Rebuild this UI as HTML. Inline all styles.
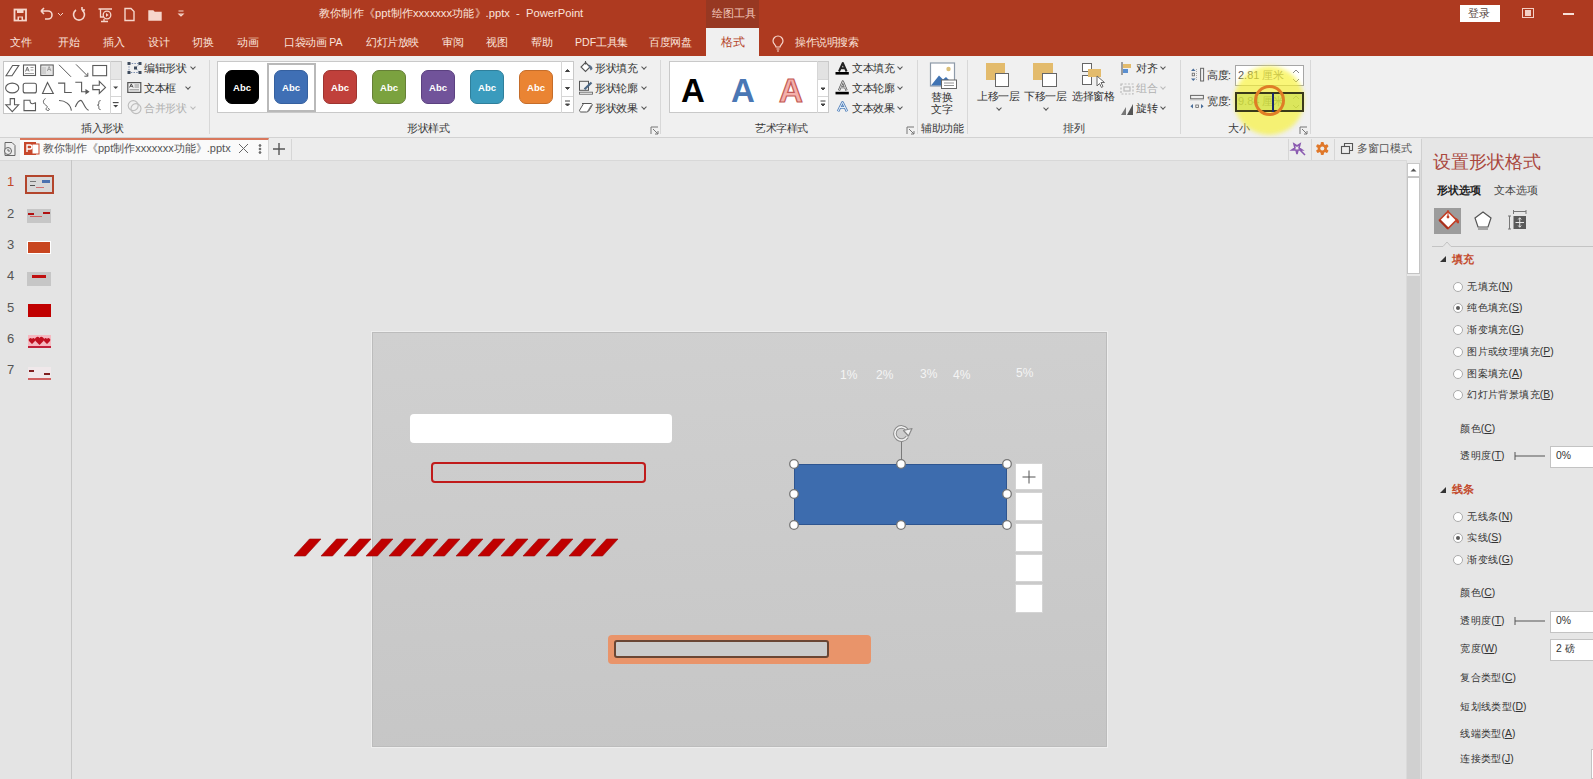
<!DOCTYPE html>
<html><head><meta charset="utf-8">
<style>
*{margin:0;padding:0;box-sizing:border-box}
html,body{width:1593px;height:779px;overflow:hidden;background:#e4e4e4;font-family:"Liberation Sans",sans-serif;position:relative}
.a{position:absolute}
.t{position:absolute;white-space:nowrap;line-height:1}
svg{position:absolute;overflow:visible}
#title{left:0;top:0;width:1593px;height:56px;background:#ae3a20}
.wt{color:#fbe3dc;font-size:10.6px}
.rb{color:#333;font-size:10.5px}
.gl{color:#3a3a3a;font-size:10.5px}
.dd{width:4px;height:4px;border-right:1px solid;border-bottom:1px solid;transform:rotate(45deg)}
.pn{color:#333;font-size:10.4px;margin-top:1px}
.sb{left:1016px;width:26px;background:#fff;box-shadow:0 0 0 1px #d4d4d4}
.sty{top:70px;width:34px;height:34px;border-radius:7px;border:1.5px solid}
.sty::after{content:"Abc";position:absolute;left:0;right:0;top:11.5px;text-align:center;color:#fff;font-size:9.5px;font-weight:bold;line-height:1}
i{font-style:normal;display:inline-block;width:1em;text-align:center}
</style></head>
<body>
<!-- TITLE BAR -->
<div id="title" class="a"></div>
<div class="a" style="left:706px;top:0;width:53px;height:28px;background:#973822"></div>
<div class="t wt" style="left:712px;top:8px;font-size:11px;color:#f3c9bd"><i>绘</i><i>图</i><i>工</i><i>具</i></div>
<div class="t wt" style="left:319px;top:8px;font-size:11.2px"><i>教</i><i>你</i><i>制</i><i>作</i><i>《</i>ppt<i>制</i><i>作</i>xxxxxxx<i>功</i><i>能</i><i>》</i>.pptx&nbsp; -&nbsp; PowerPoint</div>
<!-- QAT icons -->
<svg style="left:0;top:0" width="200" height="28" fill="none" stroke="#f6d6cc" stroke-width="1.6">
  <rect x="14.5" y="9.5" width="11.5" height="11" stroke-width="1.8"/>
  <rect x="17" y="10" width="6.5" height="3" fill="#f6d6cc" stroke="none"/>
  <rect x="17.5" y="16.5" width="5.5" height="4" fill="#f6d6cc" stroke="none"/>
  <rect x="19" y="17.5" width="2.5" height="2.5" fill="#ae3a20" stroke="none"/>
  <path d="M41 11 h7 a4 4 0 0 1 0 8 h-3 M41 11 l3 -3 M41 11 l3 3"/>
  <path d="M58 13 l2.5 2.5 l2.5 -2.5" stroke-width="1"/>
  <path d="M82 10 a5.5 5.5 0 1 1 -6 0 M82 10 v-3 M82 10 h3" />
  <path d="M98.5 9 h13.5 M100.5 9 v8 h3 M104 19 v2 M101 21.5 h7" stroke-width="1.3"/>
  <circle cx="107" cy="15" r="3.8" stroke-width="1.3"/>
  <path d="M106 13 l2.6 2 l-2.6 2 z" fill="#f6d6cc" stroke="none"/>
  <path d="M125 8.5 h6 l3 3 v9 h-9 z" stroke-width="1.4"/>
  <path d="M149 11 h4 l1.5 1.5 h6.5 v7.5 h-12 z" stroke-width="1.4" fill="#f6d6cc"/>
  <path d="M178.5 11 h5 M179 14 l2 2 l2 -2 z" stroke-width="1.2"/>
</svg>
<div class="a" style="left:1460px;top:5px;width:40px;height:17px;background:#fff"></div>
<div class="t" style="left:1468px;top:8px;font-size:11px;color:#5a4a44"><i>登</i><i>录</i></div>
<div class="a" style="left:1522px;top:8px;width:12px;height:10px;border:1.5px solid #f3cfc4"></div>
<div class="a" style="left:1525px;top:10px;width:6px;height:6px;background:#f3cfc4"></div>
<div class="a" style="left:1563px;top:13px;width:11px;height:1.5px;background:#f8e0d8"></div>
<!-- TABS -->
<div class="a" style="left:706px;top:28px;width:53px;height:29px;background:#f0f0f0"></div>
<div class="t wt" style="left:10px;top:37px"><i>文</i><i>件</i></div>
<div class="t wt" style="left:58px;top:37px"><i>开</i><i>始</i></div>
<div class="t wt" style="left:103px;top:37px"><i>插</i><i>入</i></div>
<div class="t wt" style="left:148px;top:37px"><i>设</i><i>计</i></div>
<div class="t wt" style="left:192px;top:37px"><i>切</i><i>换</i></div>
<div class="t wt" style="left:237px;top:37px"><i>动</i><i>画</i></div>
<div class="t wt" style="left:284px;top:37px"><i>口</i><i>袋</i><i>动</i><i>画</i> PA</div>
<div class="t wt" style="left:366px;top:37px"><i>幻</i><i>灯</i><i>片</i><i>放</i><i>映</i></div>
<div class="t wt" style="left:442px;top:37px"><i>审</i><i>阅</i></div>
<div class="t wt" style="left:486px;top:37px"><i>视</i><i>图</i></div>
<div class="t wt" style="left:531px;top:37px"><i>帮</i><i>助</i></div>
<div class="t wt" style="left:575px;top:37px">PDF<i>工</i><i>具</i><i>集</i></div>
<div class="t wt" style="left:649px;top:37px"><i>百</i><i>度</i><i>网</i><i>盘</i></div>
<div class="t" style="left:721px;top:36px;font-size:12px;color:#b5472c"><i>格</i><i>式</i></div>
<svg style="left:771px;top:35px" width="16" height="18" fill="none" stroke="#f6d6cc" stroke-width="1.2">
  <path d="M5 12 c0 -2 -3 -3 -3 -6 a5 5 0 0 1 10 0 c0 3 -3 4 -3 6 z M5.5 14 h3 M6 16 h2"/>
</svg>
<div class="t wt" style="left:795px;top:37px"><i>操</i><i>作</i><i>说</i><i>明</i><i>搜</i><i>索</i></div>

<!-- RIBBON -->
<div class="a" style="left:0;top:56px;width:1593px;height:82px;background:#f0f0f0;border-bottom:1px solid #d2d2d2"></div>

<!-- RIBBON GROUP 1: insert shapes -->
<div class="a" style="left:3px;top:61px;width:119px;height:53px;background:#fff;border:1px solid #c6c6c6"></div>
<div class="a" style="left:110px;top:61px;width:12px;height:53px;border-left:1px solid #d6d6d6"></div>
<div class="a" style="left:111px;top:62px;width:10px;height:17px;background:#e6e6e6"></div>
<div class="a" style="left:111px;top:79px;width:10px;height:1px;background:#d6d6d6"></div>
<div class="a" style="left:111px;top:96px;width:10px;height:1px;background:#d6d6d6"></div>
<svg style="left:0;top:0" width="125" height="120" fill="none" stroke="#5a5a5a" stroke-width="1.1">
  <path d="M6 75.7 L12.6 65.5 H18.8 L12 75.7 Z"/>
  <rect x="23.5" y="65" width="12" height="10.5"/><path d="M25.5 71.5 l1.8 -4.5 l1.8 4.5 M26.2 70 h2.2" stroke-width=".8"/><path d="M30.5 67.5 h3 M30.5 70 h3 M25 73.5 h9" stroke-width=".8" stroke="#888"/>
  <rect x="40.8" y="65" width="12.4" height="10.5"/><path d="M43 66.5 v8 M45 66.5 v8" stroke-width=".8" stroke="#888"/><path d="M47.3 71 l1.8 -4.5 l1.8 4.5 M48 69.5 h2.2" stroke-width=".8"/><rect x="46" y="66" width="6.5" height="9" fill="#ccc" stroke="none" opacity=".5"/>
  <path d="M59 64.8 L71 76.8" stroke-width="1"/>
  <path d="M76 64.4 L87.8 76.2 M87.8 76.2 v-3.4 M87.8 76.2 h-3.4" stroke-width="1"/>
  <rect x="92.8" y="65.5" width="13.8" height="10.2"/>
  <ellipse cx="12.2" cy="88" rx="6.6" ry="4.9"/>
  <rect x="23.2" y="83.2" width="13.2" height="9.7" rx="2"/>
  <path d="M47.5 82.5 L42.5 93.5 H53.3 Z"/>
  <path d="M58.1 83.1 H64.7 V92.5 H71.8"/>
  <path d="M75.3 82.3 H81.6 V91.7 H87.5"/><path d="M86 90 l2.6 1.7 l-2.6 1.7 z" fill="#5a5a5a"/>
  <path d="M92.8 85.2 H99.3 V81.3 L105.5 87.4 L99.3 93.5 V89.6 H92.8 Z"/>
  <path d="M10.2 98.6 H14.5 V104.8 H18.6 L12.3 111.6 L5.8 104.8 H10.2 Z"/>
  <path d="M24 100.2 H30 c0 2 1 3.5 2.5 3.5 c1.5 0 2.5 -1 3 -1 V110.6 H24 Z"/>
  <path d="M45.5 98.6 c-2 1 -3 3.5 -1 5.5 c2 2 4 2 2 4 c-1.5 1.5 1 3 2.5 2 c1 -.5 0 -2 -1 -1.5" stroke-width="1"/>
  <path d="M59 100.5 C65 100.5 70.5 104 71.4 110.6"/>
  <path d="M75.3 107 C77 103 79 100.4 80.8 100.4 C83 100.4 85 110.2 88.7 110.2"/>
  <path d="M100.6 100.6 c-1.5 0 -1.8 .8 -1.8 2.2 v1 c0 .8 -.6 1.3 -1.3 1.3 c.7 0 1.3 .5 1.3 1.3 v1 c0 1.4 .3 2.2 1.8 2.2" stroke-width="1"/>
  <path d="M113.2 86.5 l2.5 2.5 l2.5 -2.5 z" fill="#444" stroke="none"/>
  <path d="M112.8 102.6 h5.8" stroke="#444"/><path d="M113.2 105 l2.5 2.5 l2.5 -2.5 z" fill="#444" stroke="none"/>
</svg>
<svg style="left:0;top:0" width="150" height="120" fill="none">
  <path d="M129 63.5 H140 M129 63.5 V72.5 H140 M140 63.5 L135.5 68 L140 72.5" stroke="#7d8fb0" stroke-width="1" stroke-dasharray="1.5 1.2"/>
  <g fill="#3d4a5c"><rect x="127.5" y="62" width="3" height="3"/><rect x="138.5" y="62" width="3" height="3"/><rect x="127.5" y="71" width="3" height="3"/><rect x="138.5" y="71" width="3" height="3"/><rect x="134" y="66.5" width="3" height="3"/></g>
  <rect x="127.8" y="82.6" width="13" height="9.8" stroke="#555" stroke-width="1.2"/>
  <path d="M129.5 87.5 l1.8 -3.6 l1.8 3.6 M130.2 86.3 h2.2" stroke="#444" stroke-width=".9"/><path d="M134.5 85 h4.5 M134.5 87 h4.5 M129.5 89.8 h9.5" stroke="#777" stroke-width=".8"/>
  <circle cx="133.2" cy="105.6" r="5" stroke="#bdbdbd" stroke-width="1.1"/><circle cx="136" cy="108.6" r="5" stroke="#bdbdbd" stroke-width="1.1"/>
</svg>
<div class="t rb" style="left:144px;top:63px"><i>编</i><i>辑</i><i>形</i><i>状</i></div>
<div class="t rb" style="left:144px;top:83px"><i>文</i><i>本</i><i>框</i></div>
<div class="t rb" style="left:144px;top:103px;color:#b0b0b0"><i>合</i><i>并</i><i>形</i><i>状</i></div>
<div class="t gl" style="left:81px;top:123px"><i>插</i><i>入</i><i>形</i><i>状</i></div>
<div class="a" style="left:209px;top:60px;width:1px;height:74px;background:#d8d8d8"></div>

<!-- GROUP 2: shape styles -->
<div class="a" style="left:217px;top:61px;width:357px;height:52px;background:#fff;border:1px solid #c9c9c9"></div>
<div class="a" style="left:561px;top:61px;width:13px;height:52px;border-left:1px solid #d6d6d6"></div>
<div class="a" style="left:562px;top:79px;width:11px;height:1px;background:#d6d6d6"></div>
<div class="a" style="left:562px;top:96px;width:11px;height:1px;background:#d6d6d6"></div>
<svg style="left:561px;top:61px" width="13" height="52" stroke="#444" fill="#444">
  <path d="M4.5 10.5 l2 -2 l2 2 z"/><path d="M4.5 26.5 l2 2 l2 -2 z"/><path d="M4 40 h5" fill="none"/><path d="M4.5 43 l2 2 l2 -2 z"/>
</svg>
<div class="a" style="left:267px;top:63px;width:49px;height:49px;border:2px solid #b9b9b9;background:#fff"></div>
<div class="a sty" style="left:225px;background:#000;border-color:#000"></div>
<div class="a sty" style="left:274px;background:#3f6fb5;border-color:#35609f"></div>
<div class="a sty" style="left:323px;background:#c0403b;border-color:#9e3430"></div>
<div class="a sty" style="left:372px;background:#7ba23f;border-color:#667f37"></div>
<div class="a sty" style="left:421px;background:#71539a;border-color:#5b4180"></div>
<div class="a sty" style="left:470px;background:#3a9bbd;border-color:#2f7f9b"></div>
<div class="a sty" style="left:519px;background:#ea8433;border-color:#c56d2a"></div>
<svg style="left:0;top:0" width="600" height="120" fill="none">
  <path d="M585.5 62.5 L590 67 L585.5 71.5 L581 67 Z" stroke="#555" stroke-width="1.1" fill="#fff"/>
  <path d="M585.5 61 v3.5" stroke="#555" stroke-width="1.1"/>
  <path d="M588.5 64.5 c2.5 .8 4 2.5 4 4.5 l-1.8 1.5 l-1.2 -2.5 z" fill="#5b6f88"/>
  <rect x="579.5" y="81.3" width="9" height="9" stroke="#555" stroke-width="1"/>
  <path d="M584.5 89.3 L591.5 82.5" stroke="#4a6684" stroke-width="2.2"/>
  <rect x="579.5" y="92.2" width="13" height="2" stroke="#666" stroke-width=".9" fill="#fff"/>
  <path d="M582 103.5 H591 c1 0 1.5 1 1 2 l-3 5 c-.5 1 -1.5 1.5 -2.5 1.5 H581 c-1 0 -1.8 -1 -1.3 -2 l3 -5 c.3 -.8 .8 -1.5 1.3 -1.5 z" fill="#fff" stroke="#555" stroke-width="1"/>
  <path d="M587 111.5 l4 -6.5 l1.2 .5 l-3.5 6 z" fill="#777"/>
</svg>
<div class="t rb" style="left:595px;top:63px"><i>形</i><i>状</i><i>填</i><i>充</i></div>
<div class="t rb" style="left:595px;top:83px"><i>形</i><i>状</i><i>轮</i><i>廓</i></div>
<div class="t rb" style="left:595px;top:103px"><i>形</i><i>状</i><i>效</i><i>果</i></div>
<div class="t gl" style="left:407px;top:123px"><i>形</i><i>状</i><i>样</i><i>式</i></div>
<svg style="left:650px;top:126px" width="9" height="9" fill="none" stroke="#777" stroke-width="1"><path d="M1 8 v-7 h7 M3 3 l5 5 M8 5 v3 h-3"/></svg>
<div class="a" style="left:660px;top:60px;width:1px;height:74px;background:#d8d8d8"></div>

<!-- GROUP 3: WordArt -->
<div class="a" style="left:669px;top:61px;width:160px;height:52px;background:#fff;border:1px solid #c9c9c9"></div>
<div class="a" style="left:817px;top:61px;width:12px;height:52px;border-left:1px solid #d6d6d6"></div>
<div class="a" style="left:818px;top:62px;width:10px;height:17px;background:#e2e2e2"></div>
<div class="a" style="left:818px;top:79px;width:10px;height:1px;background:#d6d6d6"></div>
<div class="a" style="left:818px;top:96px;width:10px;height:1px;background:#d6d6d6"></div>
<svg style="left:817px;top:61px" width="12" height="52" stroke="#444" fill="#444">
  <path d="M4 27 l2 2 l2 -2 z"/><path d="M3.5 40 h5" fill="none"/><path d="M4 43 l2 2 l2 -2 z"/>
</svg>
<div class="t" style="left:681px;top:74px;font-size:33px;color:#000;font-weight:bold">A</div>
<div class="t" style="left:731px;top:74px;font-size:33px;color:#4a77b4;font-weight:bold">A</div>
<div class="t" style="left:779px;top:74px;font-size:33px;color:#f4b0aa;-webkit-text-stroke:1.2px #c45a55;font-weight:bold">A</div>
<svg style="left:0;top:0" width="860" height="120" fill="none" stroke-linejoin="round">
  <path d="M839 71.5 L842.8 63 L846.6 71.5 M840.6 68.3 h4.4" stroke="#222" stroke-width="2"/>
  <rect x="835.5" y="72" width="13.3" height="2.6" fill="#000"/>
  <path d="M839 90.5 L842.8 81.5 L846.6 90.5 M840.6 87.2 h4.4" stroke="#555" stroke-width="2.2"/>
  <path d="M839 90.5 L842.8 81.5 L846.6 90.5 M840.6 87.2 h4.4" stroke="#f0f0f0" stroke-width=".8"/>
  <rect x="835.5" y="91.8" width="13.3" height="2.6" fill="#000"/>
  <path d="M838 111.3 L842.5 102.3 L847 111.3 M839.8 107.5 h5.4" stroke="#5684bd" stroke-width="2.6"/>
  <path d="M838 111.3 L842.5 102.3 L847 111.3 M839.8 107.5 h5.4" stroke="#e3eef9" stroke-width="1"/>
</svg>
<div class="t rb" style="left:852px;top:63px"><i>文</i><i>本</i><i>填</i><i>充</i></div>
<div class="t rb" style="left:852px;top:83px"><i>文</i><i>本</i><i>轮</i><i>廓</i></div>
<div class="t rb" style="left:852px;top:103px"><i>文</i><i>本</i><i>效</i><i>果</i></div>
<div class="t gl" style="left:755px;top:123px"><i>艺</i><i>术</i><i>字</i><i>样</i><i>式</i></div>
<svg style="left:906px;top:126px" width="9" height="9" fill="none" stroke="#777" stroke-width="1"><path d="M1 8 v-7 h7 M3 3 l5 5 M8 5 v3 h-3"/></svg>
<div class="a" style="left:917px;top:60px;width:1px;height:74px;background:#d8d8d8"></div>

<!-- GROUP 4: alt text -->
<svg style="left:0;top:0" width="960" height="120">
  <rect x="930.5" y="63" width="24" height="23" fill="#fff" stroke="#8e9aa8" stroke-width="1.2"/>
  <path d="M931 85.5 L939 75.5 L943 79.5 L946 77 L953 84 V85.5 Z" fill="#3f73b3"/>
  <circle cx="948.5" cy="69" r="2.2" fill="#dcc07a"/>
  <rect x="941.5" y="80" width="15" height="8.5" fill="#fff" stroke="#666" stroke-width="1"/>
  <path d="M944 83 h10 M944 85.5 h10" stroke="#888" stroke-width=".9"/>
</svg>
<div class="t rb" style="left:931px;top:92px;font-size:11px"><i>替</i><i>换</i></div>
<div class="t rb" style="left:931px;top:104px;font-size:11px"><i>文</i><i>字</i></div>
<div class="t gl" style="left:921px;top:123px"><i>辅</i><i>助</i><i>功</i><i>能</i></div>
<div class="a" style="left:967px;top:60px;width:1px;height:74px;background:#d8d8d8"></div>

<!-- GROUP 5: arrange -->
<div class="a" style="left:986px;top:63px;width:19px;height:17px;background:#e3bb6c"></div>
<div class="a" style="left:995px;top:73px;width:14px;height:14px;background:#fff;border:1px solid #666"></div>
<div class="a" style="left:1033px;top:63px;width:20px;height:17px;background:#e3bb6c"></div>
<div class="a" style="left:1042px;top:73px;width:15px;height:14px;background:#fff;border:1px solid #666"></div>
<svg style="left:1080px;top:60px" width="28" height="30" fill="none" stroke="#666" stroke-width="1">
  <rect x="2.5" y="3.5" width="9" height="8" fill="#fff"/>
  <rect x="2.5" y="15.5" width="9" height="9" fill="#fff"/>
  <rect x="8" y="9" width="13" height="8" fill="#e3bb6c" stroke="none"/>
  <path d="M17 16 v10 l2.5 -2.5 l2 4 l1.5 -1 l-2 -4 h3.5 z" fill="#fff" stroke="#666"/>
</svg>
<div class="t rb" style="left:977px;top:91px"><i>上</i><i>移</i><i>一</i><i>层</i></div>
<div class="t rb" style="left:1024px;top:91px"><i>下</i><i>移</i><i>一</i><i>层</i></div>
<div class="t rb" style="left:1072px;top:91px"><i>选</i><i>择</i><i>窗</i><i>格</i></div>
<svg style="left:1119px;top:60px" width="16" height="56" fill="none" stroke-width="1.2">
  <path d="M3 2 v13" stroke="#666"/><rect x="4" y="4" width="8" height="4" fill="#e3bb6c" stroke="none"/><rect x="4" y="9" width="5" height="4" fill="#5a8fd0" stroke="none"/>
  <path d="M2 24 v10 h12 v-10 z" stroke="#bbb" stroke-dasharray="2 1.5"/><rect x="5" y="27" width="6" height="4" stroke="#bbb"/>
  <path d="M2 55 l5 -8 v8 z" fill="#777" stroke="none"/><path d="M8 55 l6 -11 v11 z" fill="#555" stroke="none"/>
</svg>
<div class="t rb" style="left:1136px;top:63px"><i>对</i><i>齐</i></div>
<div class="t rb" style="left:1136px;top:83px;color:#b0b0b0"><i>组</i><i>合</i></div>
<div class="t rb" style="left:1136px;top:103px"><i>旋</i><i>转</i></div>
<div class="t gl" style="left:1063px;top:123px"><i>排</i><i>列</i></div>
<div class="a" style="left:1180px;top:60px;width:1px;height:74px;background:#d8d8d8"></div>

<div class="a dd" style="left:191px;top:65px;border-color:#555"></div>
<div class="a dd" style="left:186px;top:85px;border-color:#555"></div>
<div class="a dd" style="left:191px;top:105px;border-color:#bbb"></div>
<div class="a dd" style="left:642px;top:65px;border-color:#555"></div>
<div class="a dd" style="left:642px;top:85px;border-color:#555"></div>
<div class="a dd" style="left:642px;top:105px;border-color:#555"></div>
<div class="a dd" style="left:898px;top:65px;border-color:#555"></div>
<div class="a dd" style="left:898px;top:85px;border-color:#555"></div>
<div class="a dd" style="left:898px;top:105px;border-color:#555"></div>
<div class="a dd" style="left:997px;top:106px;border-color:#555"></div>
<div class="a dd" style="left:1044px;top:106px;border-color:#555"></div>
<div class="a dd" style="left:1161px;top:65px;border-color:#555"></div>
<div class="a dd" style="left:1161px;top:85px;border-color:#bbb"></div>
<div class="a dd" style="left:1161px;top:105px;border-color:#555"></div>
<!-- GROUP 6: size -->
<svg style="left:0;top:0" width="1210" height="120" fill="none">
  <path d="M1191 71 l2.3 -2.6 l2.3 2.6 z M1191 78.5 l2.3 2.6 l2.3 -2.6 z" fill="#4a6e9a"/>
  <rect x="1192.2" y="73.2" width="2.4" height="2.6" stroke="#666" stroke-width=".8"/>
  <path d="M1196.5 69 v12" stroke="#999" stroke-width=".8" stroke-dasharray="1 1"/>
  <rect x="1200.6" y="68.3" width="3" height="12.7" stroke="#666" stroke-width="1"/>
  <rect x="1190.6" y="95.4" width="12.8" height="3.4" stroke="#666" stroke-width="1"/>
  <path d="M1190.5 100 h13" stroke="#999" stroke-width=".8" stroke-dasharray="1 1"/>
  <path d="M1193 104 l-2.6 2.3 l2.6 2.3 z M1201 104 l2.6 2.3 l-2.6 2.3 z" fill="#4a6e9a"/>
  <rect x="1195.8" y="105" width="2.6" height="2.4" stroke="#666" stroke-width=".8"/>
</svg>
<div class="t rb" style="left:1207px;top:70px"><i>高</i><i>度</i>:</div>
<div class="t rb" style="left:1207px;top:96px"><i>宽</i><i>度</i>:</div>
<div class="a" style="left:1235px;top:65px;width:69px;height:21px;background:#fff;border:1px solid #a6a6a6"></div>
<div class="t" style="left:1238px;top:70px;font-size:11px;color:#555">2.81 <span style="color:#777"><i>厘</i><i>米</i></span></div>
<svg style="left:1291px;top:67px" width="10" height="18" fill="none" stroke="#888" stroke-width="1"><path d="M2 6 l3 -3 l3 3 M2 12 l3 3 l3 -3"/></svg>
<div class="a" style="left:1235px;top:92px;width:69px;height:20px;background:#fff;border:1px solid #a6a6a6"></div>
<div class="t" style="left:1238px;top:96px;font-size:11px;color:#888">9.84 <i>厘</i><i>米</i></div>
<svg style="left:1291px;top:93px" width="10" height="18" fill="none" stroke="#aaa" stroke-width="1"><path d="M2 6 l3 -3 l3 3 M2 12 l3 3 l3 -3"/></svg>
<div class="t gl" style="left:1228px;top:123px"><i>大</i><i>小</i></div>
<svg style="left:1299px;top:126px" width="9" height="9" fill="none" stroke="#777" stroke-width="1"><path d="M1 8 v-7 h7 M3 3 l5 5 M8 5 v3 h-3"/></svg>
<div class="a" style="left:1310px;top:60px;width:1px;height:74px;background:#d8d8d8"></div>
<!-- cursor highlight -->
<div class="a" style="left:1234px;top:66px;width:70px;height:69px;border-radius:50%;background:rgba(247,242,50,.66);filter:blur(2px)"></div>
<div class="a" style="left:1235px;top:92px;width:69px;height:20px;border:2px solid #3a3a1a;background:rgba(160,200,40,.35)"></div>
<div class="a" style="left:1272px;top:93px;width:2px;height:19px;background:#1a2a6a"></div>
<div class="a" style="left:1254px;top:85px;width:31px;height:31px;border-radius:50%;border:3.5px solid #df7d26"></div>


<!-- DOC TAB BAR -->
<div class="a" style="left:0;top:138px;width:1421px;height:23px;background:#ececec;border-bottom:1px solid #d8d8d8"></div>
<svg style="left:2px;top:141px" width="16" height="16" fill="none" stroke="#666" stroke-width="1">
  <path d="M3 1.5 h7 l3 3 v10 h-10 z"/><circle cx="6" cy="10" r="3.5" fill="#ececec"/><path d="M6 8 v2 h2"/>
</svg>
<div class="a" style="left:20px;top:138px;width:249px;height:22px;background:#fafafa;border-top:2px solid #d9785d;border-right:1px solid #d6d6d6"></div>
<svg style="left:24px;top:141px" width="16" height="16">
  <rect x="0" y="1" width="12" height="13" fill="#c7472b"/><rect x="8" y="3" width="7" height="10" fill="#fff" stroke="#c7472b"/>
  <path d="M3 11 v-7 h3 a2 2 0 0 1 0 4 h-3" fill="none" stroke="#fff" stroke-width="1.4"/>
</svg>
<div class="t" style="left:43px;top:143px;font-size:11px;color:#555"><i>教</i><i>你</i><i>制</i><i>作</i><i>《</i>ppt<i>制</i><i>作</i>xxxxxxx<i>功</i><i>能</i><i>》</i>.pptx</div>
<svg style="left:238px;top:143px" width="30" height="12" fill="none" stroke="#666" stroke-width="1"><path d="M1 1 l9 9 M10 1 l-9 9"/><circle cx="22" cy="2.5" r=".9" fill="#666"/><circle cx="22" cy="6" r=".9" fill="#666"/><circle cx="22" cy="9.5" r=".9" fill="#666"/></svg>
<svg style="left:272px;top:142px" width="14" height="14" fill="none" stroke="#555" stroke-width="1.4"><path d="M7 1 v12 M1 7 h12"/></svg>
<div class="a" style="left:291px;top:139px;width:1px;height:21px;background:#d6d6d6"></div>
<div class="a" style="left:1288px;top:139px;width:1px;height:21px;background:#d6d6d6"></div>
<div class="a" style="left:1311px;top:139px;width:1px;height:21px;background:#d6d6d6"></div>
<div class="a" style="left:1334px;top:139px;width:1px;height:21px;background:#d6d6d6"></div>
<svg style="left:1291px;top:141px" width="16" height="16" fill="none" stroke="#8a5ab0" stroke-width="1.6"><path d="M3 3 l3 2 l3 -2 l-1 4 l3 2 h-4 l-1 4 l-1 -4 h-4 l3 -2 z M9 9 l5 5" /></svg>
<svg style="left:1314px;top:141px" width="16" height="16"><g fill="#e0782a" transform="translate(8.3 7.6)"><rect x="-1.6" y="-6.5" width="3.2" height="13" rx="1"/><rect x="-1.6" y="-6.5" width="3.2" height="13" rx="1" transform="rotate(60)"/><rect x="-1.6" y="-6.5" width="3.2" height="13" rx="1" transform="rotate(120)"/><circle r="4.6"/></g><circle cx="8.3" cy="7.6" r="2" fill="#ececec"/></svg>
<svg style="left:1340px;top:142px" width="14" height="14" fill="none" stroke="#555" stroke-width="1.1"><rect x="1.5" y="4.5" width="8" height="7"/><path d="M4.5 4.5 v-3 h8 v7 h-3"/></svg>
<div class="t" style="left:1357px;top:143px;font-size:11px;color:#555"><i>多</i><i>窗</i><i>口</i><i>模</i><i>式</i></div>

<!-- THUMB PANE -->
<div class="a" style="left:71px;top:160px;width:1px;height:619px;background:#c6c6c6"></div>
<div class="t" style="left:7px;top:175px;font-size:13px;color:#c0462b">1</div>
<div class="t" style="left:7px;top:207px;font-size:13px;color:#555">2</div>
<div class="t" style="left:7px;top:238px;font-size:13px;color:#555">3</div>
<div class="t" style="left:7px;top:269px;font-size:13px;color:#555">4</div>
<div class="t" style="left:7px;top:301px;font-size:13px;color:#555">5</div>
<div class="t" style="left:7px;top:332px;font-size:13px;color:#555">6</div>
<div class="t" style="left:7px;top:363px;font-size:13px;color:#555">7</div>
<div class="a" style="left:25px;top:175px;width:29px;height:19px;border:2.5px solid #b3452c;background:#d8d8d8"></div>
<div class="a" style="left:30px;top:181px;width:6px;height:1px;background:#777"></div>
<div class="a" style="left:42px;top:180px;width:8px;height:3px;background:#4a72b0"></div>
<div class="a" style="left:30px;top:185px;width:5px;height:1px;background:#555"></div>
<div class="a" style="left:36px;top:187px;width:8px;height:1px;background:#d07070"></div>
<div class="a" style="left:27px;top:209px;width:24px;height:14px;background:#c6c6c6"></div>
<div class="a" style="left:28px;top:213px;width:6px;height:2px;background:#b01010"></div>
<div class="a" style="left:43px;top:212px;width:7px;height:2px;background:#b01010"></div>
<div class="a" style="left:30px;top:216px;width:12px;height:1px;background:#d06060"></div>
<div class="a" style="left:27px;top:241px;width:24px;height:13px;background:#c8451f;border:1px solid #fff"></div>
<div class="a" style="left:27px;top:272px;width:24px;height:14px;background:#c6c6c6"></div>
<div class="a" style="left:32px;top:275px;width:14px;height:3px;background:#c01010"></div>
<div class="a" style="left:28px;top:304px;width:23px;height:13px;background:#c00000"></div>
<div class="a" style="left:28px;top:335px;width:23px;height:13px;background:#f5b8c0;border-bottom:2px solid #c0203a"></div>
<svg style="left:28px;top:335px" width="23" height="11" fill="#c01020"><path d="M4 9 l-3 -3 a1.6 1.6 0 0 1 3 -2 a1.6 1.6 0 0 1 3 2 z"/><path d="M11.5 10 l-4 -4 a2.2 2.2 0 0 1 4 -3 a2.2 2.2 0 0 1 4 3 z"/><path d="M19 9 l-3 -3 a1.6 1.6 0 0 1 3 -2 a1.6 1.6 0 0 1 3 2 z"/></svg>
<div class="a" style="left:28px;top:367px;width:23px;height:13px;background:#f0e8ea;border-bottom:2px solid #d06060"></div>
<div class="a" style="left:29px;top:370px;width:5px;height:2px;background:#802020"></div>
<div class="a" style="left:44px;top:373px;width:6px;height:2px;background:#802020"></div>

<!-- SLIDE -->
<div class="a" style="left:371px;top:331px;width:737px;height:417px;border:1px solid #eeeeee"></div>
<div class="a" style="left:372px;top:332px;width:735px;height:415px;background:linear-gradient(178deg,#d0d0d0 0%,#c6c6c6 100%);border:1px solid #bcbcbc"></div>
<div class="a" style="left:410px;top:414px;width:262px;height:29px;background:#fff;border-radius:4px"></div>
<div class="a" style="left:431px;top:462px;width:215px;height:21px;border:2px solid #c01b1b;border-radius:4px"></div>
<svg style="left:0;top:0" width="1593" height="779">
  <g fill="#c00000" stroke="#9a0a0a" stroke-width=".6"><path d="M294 556 L305.5 556 L321 539 L309.5 539 Z"/><path d="M321 556 L332.5 556 L348 539 L336.5 539 Z"/><path d="M344 556 L355.5 556 L371 539 L359.5 539 Z"/><path d="M366 556 L377.5 556 L393 539 L381.5 539 Z"/><path d="M389 556 L400.5 556 L416 539 L404.5 539 Z"/><path d="M411 556 L422.5 556 L438 539 L426.5 539 Z"/><path d="M433 556 L444.5 556 L460 539 L448.5 539 Z"/><path d="M456 556 L467.5 556 L483 539 L471.5 539 Z"/><path d="M478 556 L489.5 556 L505 539 L493.5 539 Z"/><path d="M501 556 L512.5 556 L528 539 L516.5 539 Z"/><path d="M523 556 L534.5 556 L550 539 L538.5 539 Z"/><path d="M546 556 L557.5 556 L573 539 L561.5 539 Z"/><path d="M569 556 L580.5 556 L596 539 L584.5 539 Z"/><path d="M591 556 L602.5 556 L618 539 L606.5 539 Z"/></g>
</svg>
<div class="a" style="left:608px;top:635px;width:263px;height:29px;background:#e9946a;border-radius:4px"></div>
<div class="a" style="left:614px;top:640px;width:215px;height:18px;background:#cbcbcb;border:2px solid #6a4634;border-radius:3px"></div>
<!-- percent labels -->
<div class="t" style="left:840px;top:369px;font-size:12px;color:#f4f4f4">1%</div>
<div class="t" style="left:876px;top:369px;font-size:12px;color:#f4f4f4">2%</div>
<div class="t" style="left:920px;top:368px;font-size:12px;color:#f4f4f4">3%</div>
<div class="t" style="left:953px;top:369px;font-size:12px;color:#f4f4f4">4%</div>
<div class="t" style="left:1016px;top:367px;font-size:12px;color:#f4f4f4">5%</div>
<!-- blue shape -->
<div class="a" style="left:794px;top:464px;width:213px;height:61px;background:#3d6cae;border:1px solid #2e5590"></div>
<svg style="left:0;top:0" width="1593" height="779">
  <path d="M901.5 442 v18" stroke="#7a7a7a" stroke-width="1"/>
  <path d="M907.2 436.8 A6.6 6.6 0 1 1 906.8 429.6" fill="none" stroke="#8a8a8a" stroke-width="3.6"/>
  <path d="M907.2 436.8 A6.6 6.6 0 1 1 906.8 429.6" fill="none" stroke="#f2f2f2" stroke-width="1.6"/>
  <path d="M903.5 430.5 L912 428.5 L908.5 436 Z" fill="#f2f2f2" stroke="#8a8a8a" stroke-width="1.2" stroke-linejoin="round"/>
  <g fill="#fff" stroke="#767676" stroke-width="1.3">
    <circle cx="794" cy="464" r="4.3"/><circle cx="901" cy="464" r="4.3"/><circle cx="1007" cy="464" r="4.3"/>
    <circle cx="794" cy="494" r="4.3"/><circle cx="1007" cy="494" r="4.3"/>
    <circle cx="794" cy="525" r="4.3"/><circle cx="901" cy="525" r="4.3"/><circle cx="1007" cy="525" r="4.3"/>
  </g>
</svg>
<div class="a sb" style="top:464px;height:25px"></div>
<div class="a sb" style="top:493px;height:27px"></div>
<div class="a sb" style="top:524px;height:27px"></div>
<div class="a sb" style="top:555px;height:26px"></div>
<div class="a sb" style="top:585px;height:27px"></div>
<svg style="left:1022px;top:470px" width="14" height="14" fill="none" stroke="#555" stroke-width="1"><path d="M7 0.5 v13 M0.5 7 h13"/></svg>

<!-- SCROLLBAR -->
<div class="a" style="left:1406px;top:160px;width:15px;height:619px;background:linear-gradient(#e8e8e8 0,#e8e8e8 116px,#d0d0d0 116px);border-left:1px solid #dadada;border-right:1px solid #dcdcdc"></div>
<div class="a" style="left:1407px;top:163px;width:13px;height:14px;background:#fff;border:1px solid #c8c8c8"></div>
<svg style="left:1407px;top:163px" width="13" height="14"><path d="M3.5 8.5 l3 -3 l3 3 z" fill="#555"/></svg>
<div class="a" style="left:1407px;top:177px;width:13px;height:97px;background:#fff;border:1px solid #c4c4c4"></div>
<!-- FORMAT PANE -->
<div class="a" style="left:1421px;top:139px;width:172px;height:640px;background:#e6e6e6;border-left:1px solid #d0d0d0"></div>
<div class="t" style="left:1433px;top:153px;font-size:18px;color:#aa483e"><i>设</i><i>置</i><i>形</i><i>状</i><i>格</i><i>式</i></div>
<div class="t" style="left:1437px;top:185px;font-size:11px;color:#222;font-weight:bold"><i>形</i><i>状</i><i>选</i><i>项</i></div>
<div class="t" style="left:1494px;top:185px;font-size:11px;color:#444"><i>文</i><i>本</i><i>选</i><i>项</i></div>
<div class="a" style="left:1434px;top:208px;width:27px;height:26px;background:#9c9c9c"></div>
<svg style="left:1434px;top:208px" width="100" height="26">
  <path d="M14 3.5 l8.5 8.5 l-8.5 8.5 l-8.5 -8.5 z" fill="#fff" stroke="#c23f26" stroke-width="1.6"/>
  <path d="M5.5 12 l8.5 8.5" stroke="#a8301c" stroke-width="2.2"/>
  <path d="M21 9.5 c3 1 4.5 3 4 5.5 c-1 1 -2.5 0 -3 -1.5 z" fill="#c23f26"/>
  <circle cx="14" cy="9" r="1.4" fill="#c23f26"/><path d="M14 2 v6" stroke="#c23f26" stroke-width="1"/>
  <path d="M49 4 l8 6 l-3 9 h-10 l-3 -9 z" fill="#fff" stroke="#555" stroke-width="1.2"/>
  <path d="M44 21 h10" stroke="#666"/>
  <rect x="79.5" y="8" width="12.5" height="13" fill="#5a5a5a"/>
  <path d="M79.5 3.5 h12.5 M79.5 2 v4 M92 2 v4 M75.5 8 v13 M74 8 h3 M74 21 h3" stroke="#777" stroke-width="1"/>
  <path d="M85.75 10 v9 M81.5 14.5 h8.5" stroke="#e8e8e8" stroke-width="1"/>
  <path d="M84.2 11.5 l1.55 -1.8 l1.55 1.8 M84.2 17.5 l1.55 1.8 l1.55 -1.8" stroke="#e8e8e8" stroke-width=".9" fill="none"/>
</svg>
<svg style="left:1432px;top:240px" width="161" height="10"><path d="M0 6.5 H11 L15 2 L19 6.5 H161" fill="none" stroke="#c4c4c4" stroke-width="1"/></svg>
<svg style="left:1439px;top:256px" width="8" height="8"><path d="M1 6 h6 v-6 z" fill="#333"/></svg>
<div class="t" style="left:1452px;top:254px;font-size:11px;color:#c34a2c;font-weight:bold"><i>填</i><i>充</i></div>
<svg style="left:1439px;top:487px" width="8" height="8"><path d="M1 6 h6 v-6 z" fill="#333"/></svg>
<div class="t" style="left:1452px;top:484px;font-size:11px;color:#c34a2c;font-weight:bold"><i>线</i><i>条</i></div>
<div class="a" style="left:1453px;top:282px;width:10px;height:10px;border-radius:50%;background:#fff;border:1px solid #ababab"></div>
<div class="t pn" style="left:1467px;top:281px"><i>无</i><i>填</i><i>充</i>(<u>N</u>)</div>
<div class="a" style="left:1453px;top:303px;width:10px;height:10px;border-radius:50%;background:#fff;border:1px solid #ababab"></div>
<div class="a" style="left:1456px;top:306px;width:4px;height:4px;border-radius:50%;background:#5a5a5a"></div>
<div class="t pn" style="left:1467px;top:302px"><i>纯</i><i>色</i><i>填</i><i>充</i>(<u>S</u>)</div>
<div class="a" style="left:1453px;top:325px;width:10px;height:10px;border-radius:50%;background:#fff;border:1px solid #ababab"></div>
<div class="t pn" style="left:1467px;top:324px"><i>渐</i><i>变</i><i>填</i><i>充</i>(<u>G</u>)</div>
<div class="a" style="left:1453px;top:347px;width:10px;height:10px;border-radius:50%;background:#fff;border:1px solid #ababab"></div>
<div class="t pn" style="left:1467px;top:346px"><i>图</i><i>片</i><i>或</i><i>纹</i><i>理</i><i>填</i><i>充</i>(<u>P</u>)</div>
<div class="a" style="left:1453px;top:369px;width:10px;height:10px;border-radius:50%;background:#fff;border:1px solid #ababab"></div>
<div class="t pn" style="left:1467px;top:368px"><i>图</i><i>案</i><i>填</i><i>充</i>(<u>A</u>)</div>
<div class="a" style="left:1453px;top:390px;width:10px;height:10px;border-radius:50%;background:#fff;border:1px solid #ababab"></div>
<div class="t pn" style="left:1467px;top:389px"><i>幻</i><i>灯</i><i>片</i><i>背</i><i>景</i><i>填</i><i>充</i>(<u>B</u>)</div>
<div class="a" style="left:1453px;top:512px;width:10px;height:10px;border-radius:50%;background:#fff;border:1px solid #ababab"></div>
<div class="t pn" style="left:1467px;top:511px"><i>无</i><i>线</i><i>条</i>(<u>N</u>)</div>
<div class="a" style="left:1453px;top:533px;width:10px;height:10px;border-radius:50%;background:#fff;border:1px solid #ababab"></div>
<div class="a" style="left:1456px;top:536px;width:4px;height:4px;border-radius:50%;background:#5a5a5a"></div>
<div class="t pn" style="left:1467px;top:532px"><i>实</i><i>线</i>(<u>S</u>)</div>
<div class="a" style="left:1453px;top:555px;width:10px;height:10px;border-radius:50%;background:#fff;border:1px solid #ababab"></div>
<div class="t pn" style="left:1467px;top:554px"><i>渐</i><i>变</i><i>线</i>(<u>G</u>)</div>
<div class="t pn" style="left:1460px;top:423px"><i>颜</i><i>色</i>(<u>C</u>)</div>
<div class="t pn" style="left:1460px;top:450px"><i>透</i><i>明</i><i>度</i>(<u>T</u>)</div>
<div class="t pn" style="left:1460px;top:587px"><i>颜</i><i>色</i>(<u>C</u>)</div>
<div class="t pn" style="left:1460px;top:615px"><i>透</i><i>明</i><i>度</i>(<u>T</u>)</div>
<div class="t pn" style="left:1460px;top:643px"><i>宽</i><i>度</i>(<u>W</u>)</div>
<div class="t pn" style="left:1460px;top:672px"><i>复</i><i>合</i><i>类</i><i>型</i>(<u>C</u>)</div>
<div class="t pn" style="left:1460px;top:701px"><i>短</i><i>划</i><i>线</i><i>类</i><i>型</i>(<u>D</u>)</div>
<div class="t pn" style="left:1460px;top:728px"><i>线</i><i>端</i><i>类</i><i>型</i>(<u>A</u>)</div>
<div class="t pn" style="left:1460px;top:753px"><i>连</i><i>接</i><i>类</i><i>型</i>(<u>J</u>)</div>
<svg style="left:1513px;top:451px" width="32" height="10"><path d="M2 1 v8 M2 5 h30" stroke="#555" stroke-width="1"/></svg>
<div class="a" style="left:1550px;top:446px;width:50px;height:22px;background:#fff;border:1px solid #c3c3c3"></div>
<div class="t pn" style="left:1556px;top:450px">0%</div>
<svg style="left:1513px;top:616px" width="32" height="10"><path d="M2 1 v8 M2 5 h30" stroke="#555" stroke-width="1"/></svg>
<div class="a" style="left:1550px;top:611px;width:50px;height:22px;background:#fff;border:1px solid #c3c3c3"></div>
<div class="t pn" style="left:1556px;top:615px">0%</div>
<div class="a" style="left:1550px;top:639px;width:50px;height:22px;background:#fff;border:1px solid #c3c3c3"></div>
<div class="t pn" style="left:1556px;top:643px">2 <i>磅</i></div>
<div class="a" style="left:1591px;top:749px;width:5px;height:30px;background:#fff;border:1px solid #c3c3c3"></div>

</body></html>
